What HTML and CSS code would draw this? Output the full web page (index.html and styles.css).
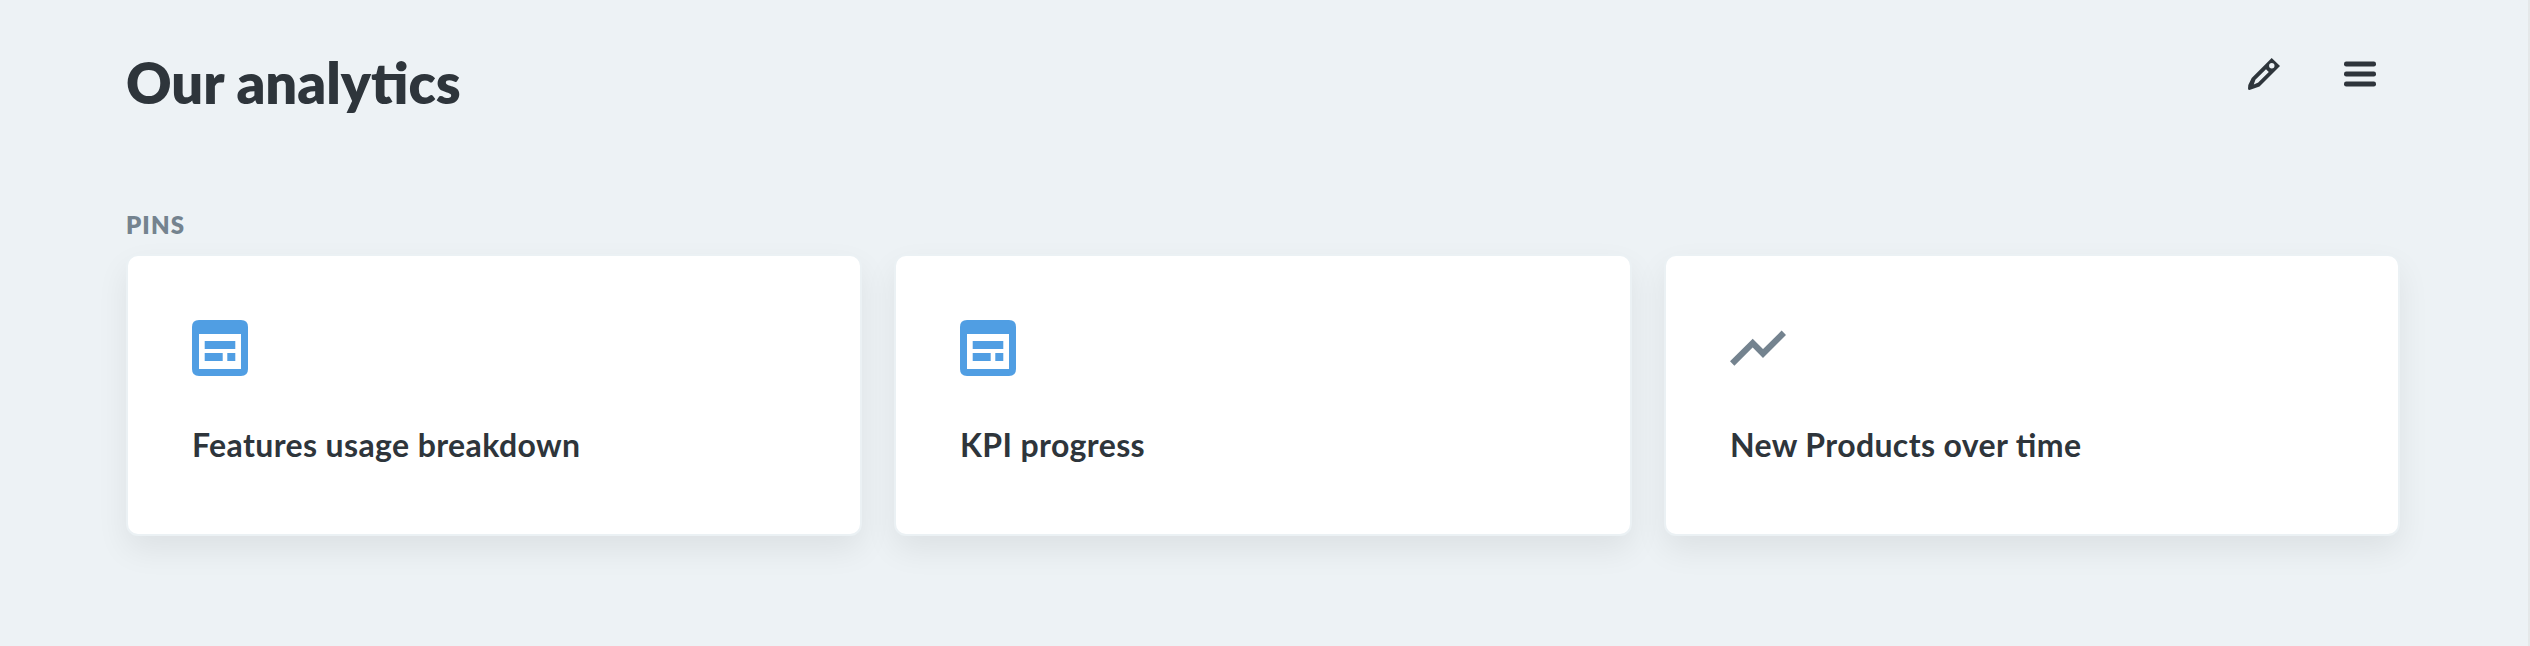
FILE: index.html
```html
<!DOCTYPE html>
<html lang="en">
<head>
<meta charset="utf-8">
<title>Our analytics</title>
<link rel="stylesheet" href="styles.css">
</head>
<body>
<main class="page">
  <header class="header">
    <h1 class="title">Our analytics</h1>
    <div class="actions">
      <svg class="action" viewBox="0 0 32 32"><path fill-rule="evenodd" d="M23.700 0L32 8L11.500 28.600L1.500 32Q0 32 0 30.500L.3 27L3.700 20ZM7.400 21.700L5.800 26.400L10.200 24.600L20.800 14L18 11.200ZM21.100 7.800a2.700 2.700 0 1 0 5.400 0a2.700 2.700 0 1 0-5.400 0Z"/></svg>
      <svg class="action" viewBox="0 0 32 32"><rect y="3.500" width="32" height="5" rx="2.200"/><rect y="13.500" width="32" height="5" rx="2.200"/><rect y="23.500" width="32" height="5" rx="2.200"/></svg>
    </div>
  </header>
  <h2 class="label">PINS</h2>
  <section class="cards">
    <article class="card">
      <svg class="icon" viewBox="0 0 56 56"><path class="dashboard" d="M7 0h42q7 0 7 7v42q0 7-7 7H7q-7 0-7-7V7Q0 0 7 0zM7 14v35h42V14zM12.700 21h30.600v8H12.700zM12.700 33h18v8h-18zM35.300 33h8v8h-8z"/></svg>
      <h3 class="name">Features usage breakdown</h3>
    </article>
    <article class="card">
      <svg class="icon" viewBox="0 0 56 56"><path class="dashboard" d="M7 0h42q7 0 7 7v42q0 7-7 7H7q-7 0-7-7V7Q0 0 7 0zM7 14v35h42V14zM12.700 21h30.600v8H12.700zM12.700 33h18v8h-18zM35.300 33h8v8h-8z"/></svg>
      <h3 class="name">KPI progress</h3>
    </article>
    <article class="card">
      <svg class="icon" viewBox="0 0 56 56"><path class="trend" d="M2.200 43.500L22.700 23.100L33 33.500L53.800 12.800"/></svg>
      <h3 class="name">New Products over time</h3>
    </article>
  </section>
</main>
</body>
</html>
```

FILE: styles.css
```css
* { box-sizing: border-box; }
body { margin: 0; background: #edf2f5; font-family: Lato, sans-serif; color: #2e353b; }
.page { height: 646px; padding: 47px 128px 0 126px; overflow: hidden; border-right: 2px solid #e5e8e9; }
.header { display: flex; justify-content: space-between; height: 164px; }
.title { margin: 1px 0 0; font-size: 56px; line-height: 70px; font-weight: 800; }
.actions { display: flex; gap: 64px; padding: 11px 24px 0 0; }
.action { width: 32px; height: 32px; fill: #2e353b; }
.label { margin: 0; height: 43px; font-size: 24px; line-height: 28px; font-weight: 800; letter-spacing: 1.1px; color: #74838f; }
.cards { display: grid; grid-template-columns: 736fr 738fr 736fr; gap: 32px; }
.card { height: 282px; padding: 64px; background: #fff; border: 2px solid #ebf1f4; border-radius: 12px; box-shadow: 0 14px 32px rgba(0, 0, 0, .07); }
.icon { display: block; width: 56px; height: 56px; }
.dashboard { fill: #509ee3; fill-rule: evenodd; }
.trend { fill: none; stroke: #74838f; stroke-width: 6.2; }
.name { margin: 48px 0 0; font-size: 32px; line-height: 42px; font-weight: 700; letter-spacing: .38px; font-feature-settings: "liga" 1; }
```
